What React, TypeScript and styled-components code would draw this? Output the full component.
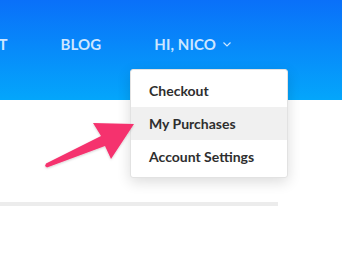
import React from 'react';
import styled, { createGlobalStyle } from 'styled-components';

const GlobalStyle = createGlobalStyle`
  html, body {
    margin: 0;
    padding: 0;
    background: #fff;
    overflow: hidden;
  }
  body {
    font-family: Lato, "Open Sans", sans-serif;
  }
`;

const Page = styled.div`
  position: relative;
  width: 342px;
  height: 261px;
  overflow: hidden;
  background: #fff;
`;

const Header = styled.header`
  height: 100px;
  background: linear-gradient(180deg, #0a70f9 0%, #04a6fb 100%);
  display: flex;
  align-items: center;
  justify-content: flex-end;
  padding: 0 111px 12px 0;
  box-sizing: border-box;
`;

const Nav = styled.nav`
  display: flex;
  align-items: center;
  gap: 53px;
  white-space: nowrap;
`;

const NavItem = styled.span`
  display: flex;
  align-items: center;
  gap: 7px;
  font-size: 15px;
  font-weight: 700;
  color: #cde6ff;
  letter-spacing: 0.1px;
`;

const Divider = styled.div`
  margin-top: 102px;
  width: 278px;
  height: 4px;
  background: #ececec;
`;

const Menu = styled.ul`
  position: absolute;
  left: 130px;
  top: 69px;
  width: 158px;
  margin: 0;
  padding: 4px 0;
  list-style: none;
  background: #fff;
  border: 1px solid #e2e2e2;
  border-radius: 3px;
  box-sizing: border-box;
  box-shadow: 0 4px 14px rgba(0, 0, 0, 0.14);
`;

const MenuItem = styled.li<{ $active?: boolean }>`
  height: 33px;
  display: flex;
  align-items: center;
  padding-left: 18px;
  font-size: 14px;
  font-weight: 700;
  color: #2e2e2e;
  background: ${(p) => (p.$active ? '#f0f0f0' : 'transparent')};
`;

const Pointer = styled.svg`
  position: absolute;
  left: 0;
  top: 0;
  pointer-events: none;
`;

const Chevron = () => (
  <svg width="8" height="5" viewBox="0 0 8 5" fill="none">
    <path d="M0.5 0.5L4 4L7.5 0.5" stroke="#cde6ff" strokeWidth="1.2" />
  </svg>
);

export default function App() {
  return (
    <Page>
      <GlobalStyle />
      <Header>
        <Nav>
          <NavItem>ABOUT</NavItem>
          <NavItem>BLOG</NavItem>
          <NavItem>
            HI, NICO <Chevron />
          </NavItem>
        </Nav>
      </Header>
      <Divider />
      <Menu>
        <MenuItem>Checkout</MenuItem>
        <MenuItem $active>My Purchases</MenuItem>
        <MenuItem>Account Settings</MenuItem>
      </Menu>
      <Pointer width="342" height="261" viewBox="0 0 342 261">
        <defs>
          <filter id="sh" x="-20%" y="-20%" width="140%" height="140%">
            <feDropShadow dx="0" dy="1" stdDeviation="1.2" floodColor="#000" floodOpacity="0.18" />
          </filter>
        </defs>
        <path
          d="M45 166 L46 163.5 L101 136 L93 123 L134 124 L111 159 L105 146 L47 167.5 Z"
          fill="#f5336e"
          strokeLinejoin="round"
          filter="url(#sh)"
        />
      </Pointer>
    </Page>
  );
}
